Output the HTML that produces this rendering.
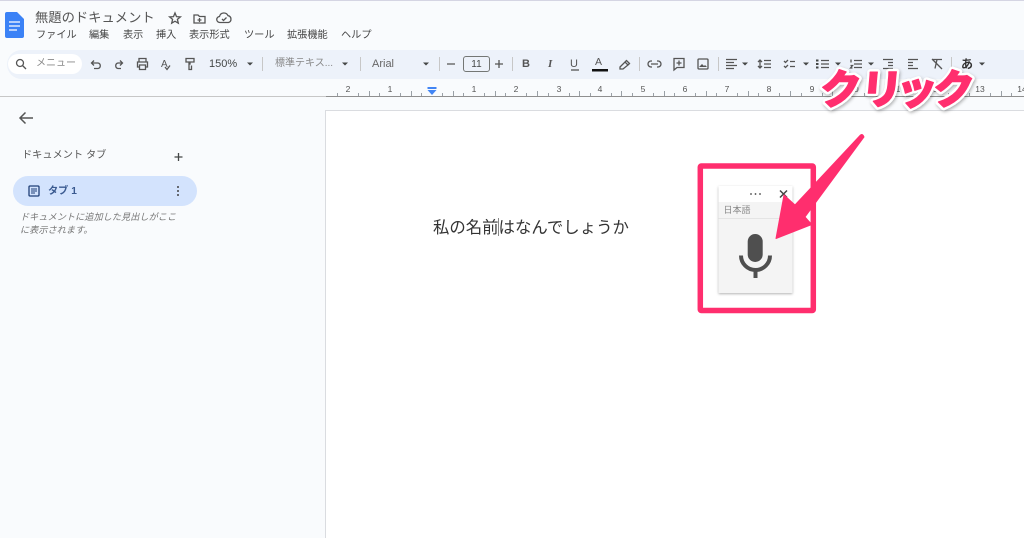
<!DOCTYPE html>
<html lang="ja"><head><meta charset="utf-8"><title>無題のドキュメント</title>
<style>
html,body{margin:0;padding:0;width:1024px;height:538px;overflow:hidden;background:#f9fbfd}
body{position:relative;font-family:"Liberation Sans","Noto Sans CJK JP",sans-serif;color:#444746}
.t{position:absolute;white-space:nowrap;line-height:1}
svg{position:absolute;left:0;top:0}
.ic{fill:none;stroke:#555;stroke-width:1.3}
</style></head><body>
<div style="position:absolute;left:0;top:0;width:1024px;height:1px;background:#d5d5e3"></div>
<div style="position:absolute;left:7px;top:50px;width:1017px;height:29px;background:#edf2fa;border-radius:15px 0 0 15px"></div>
<div style="position:absolute;left:8px;top:54px;width:74px;height:20px;background:#fff;border-radius:10px"></div>
<div style="position:absolute;left:0;top:96px;width:1024px;height:1px;background:#c7c7c7"></div>
<div style="position:absolute;left:325px;top:110px;width:699px;height:428px;background:#fff;border-left:1px solid #dadce0;border-top:1px solid #dadce0;box-sizing:border-box"></div>
<div style="position:absolute;left:13px;top:176px;width:184px;height:30px;background:#d3e3fd;border-radius:15px"></div>

<div class="t" style="left:35px;top:11px;font-size:13.3px;color:#555">無題のドキュメント</div>
<div class="t" style="left:36px;top:31px;font-size:10.2px;color:#444">ファイル</div>
<div class="t" style="left:89px;top:31px;font-size:10.2px;color:#444">編集</div>
<div class="t" style="left:123px;top:31px;font-size:10.2px;color:#444">表示</div>
<div class="t" style="left:156px;top:31px;font-size:10.2px;color:#444">挿入</div>
<div class="t" style="left:189px;top:31px;font-size:10.2px;color:#444">表示形式</div>
<div class="t" style="left:244px;top:31px;font-size:10.2px;color:#444">ツール</div>
<div class="t" style="left:287px;top:31px;font-size:10.2px;color:#444">拡張機能</div>
<div class="t" style="left:341px;top:31px;font-size:10.2px;color:#444">ヘルプ</div>
<div class="t" style="left:36px;top:59px;font-size:10px;color:#888">メニュー</div>
<div class="t" style="left:209px;top:59px;font-size:11px">150%</div>
<div class="t" style="left:275px;top:59px;font-size:10px;color:#888">標準テキス...</div>
<div class="t" style="left:372px;top:59px;font-size:11px;color:#666">Arial</div>
<div class="t" style="left:463px;top:56px;width:25px;height:14px;border:1px solid #747775;border-radius:3px;font-size:10px;line-height:15px;text-align:center">11</div>
<div class="t" style="left:522px;top:59px;font-size:11px;font-weight:bold;color:#555">B</div>
<div class="t" style="left:548px;top:59px;font-size:11px;font-style:italic;font-family:'Liberation Serif',serif;font-weight:bold;color:#555">I</div>
<div class="t" style="left:570px;top:59px;font-size:11px;color:#555">U</div>
<div class="t" style="left:595px;top:57px;font-size:10.5px;color:#555">A</div>
<div class="t" style="left:961px;top:58px;font-size:12px;font-weight:bold;color:#333">あ</div>
<div class="t" style="left:22px;top:151px;font-size:10.2px;color:#555">ドキュメント タブ</div>
<div class="t" style="left:48px;top:187px;font-size:10.2px;font-weight:bold;color:#3a5a90">タブ 1</div>
<div class="t" style="left:20px;top:211px;font-size:9.2px;font-style:italic;color:#777;line-height:13px">ドキュメントに追加した見出しがここ<br>に表示されます。</div>
<div class="t" style="left:433px;top:220px;font-size:16.4px;color:#333">私の名前はなんでしょうか</div>

<svg width="1024" height="538" viewBox="0 0 1024 538">
<path d="M5 14a2 2 0 0 1 2-2h10l7 7v17a2 2 0 0 1-2 2H7a2 2 0 0 1-2-2z" fill="#3b82f6"/>
<path d="M9 22h11M9 26h11M9 30h8" stroke="#fff" stroke-width="1.3" fill="none"/>
<path class="ic" d="M175 13l1.500 3.600 3.900.3-3 2.500.9 3.800-3.300-2-3.300 2 .9-3.800-3-2.500 3.900-.3z"/>
<path class="ic" d="M194 15h4l1.500 1.500h5.500v6.500h-11zM199.500 18v4M197.500 20h4"/>
<path class="ic" d="M220 22.500a3 3 0 0 1-.5-6 4.500 4.500 0 0 1 8.500-.8 3.500 3.500 0 0 1 .5 6.800zM222 19l1.500 1.500 3-3"/>
<circle class="ic" cx="20" cy="63" r="3.500"/><path class="ic" d="M22.500 65.500L26 69"/>
<path class="ic" d="M92 63h6a2.800 2.800 0 0 1 0 5.500h-4M94 60.500L91.500 63l2.500 2.500"/>
<path class="ic" d="M122 63h-4a2.800 2.800 0 0 0 0 5.500h3M120 60.500l2.500 2.500-2.500 2.500"/>
<path class="ic" d="M139 62v-3.500h7V62M139 67h-1.500v-5h10v5H146M139.500 65h6v4.500h-6z"/>
<text x="161" y="67" font-size="10" fill="#555" font-family="Liberation Sans">A</text>
<path class="ic" d="M165 67l2 2.500 3-4"/>
<path class="ic" d="M186 58.500h8v3.500h-8zM190 62v2h-0.500M190 64.500l-1-1v6h2.500v-4"/>
<path d="M247 62.500h6l-3 3z" fill="#444746"/>
<path d="M342 62.500h6l-3 3zM423 62.500h6l-3 3z" fill="#444746"/>
<g stroke="#c7c7c7"><path d="M262.500 57v14M360.500 57v14M439.500 57v14M512.500 57v14M639.500 57v14M718.500 57v14M951.500 57v14"/></g>
<path class="ic" d="M447 64h8M495 64h8M499 60v8"/>
<path d="M592 69h16v2.500h-16z" fill="#111"/>
<path class="ic" d="M571 70h8"/>
<path class="ic" d="M620 67l5-5 3 3-5 4h-3zM625 62l1.500-1.500 3 3-1.500 1.500"/>
<path class="ic" d="M652 61h-1a3 3 0 0 0 0 6h1M657 61h1a3 3 0 0 1 0 6h-1M651 64h7"/>
<path class="ic" d="M674 58.500h10v9h-7l-3 2.500zM679 60.500v5M676.500 63h5"/>
<rect class="ic" x="698" y="59" width="10" height="10" rx="1"/><path d="M699 67l3-3 2 2 1-1 2 2z" fill="#555"/>
<path class="ic" d="M726 59.500h11M726 62.500h8M726 65.500h11M726 68.500h8"/>
<path d="M742 62.500h6l-3 3zM803 62.500h6l-3 3zM835 62.500h6l-3 3zM868 62.500h6l-3 3zM979 62.500h6l-3 3z" fill="#444746"/>
<path class="ic" d="M760 60v8M758 62l2-2 2 2M758 66l2 2 2-2M764 60.500h7M764 64h7M764 67.500h7"/>
<path class="ic" d="M784 61l1.500 1.500 2.500-2.500M784 66l1.500 1.500 2.500-2.500M790 61.500h5M790 66.500h5"/>
<path class="ic" d="M821 60.500h8M821 64h8M821 67.500h8"/><path d="M816 59.500h2.500v2h-2.500zM816 63h2.500v2h-2.500zM816 66.500h2.500v2h-2.500z" fill="#444746"/>
<path class="ic" d="M854 60.500h8M854 64h8M854 67.500h8M851 59.500v3M850.500 65.500h2l-2 2.500h2"/>
<path class="ic" d="M883 59.500h10M888 62.500h5M888 65.500h5M883 68.500h10"/>
<path class="ic" d="M908 59.500h10M908 62.500h5M908 65.500h5M908 68.500h10"/>
<path class="ic" d="M932 59.500h10M937 59.500l-2 9M932 59l10 10"/>
<path d="M0 96.500h326" stroke="#c7c7c7"/>
<path d="M326 96.500h698" stroke="#8f8f8f"/>
<g font-size="8.500" fill="#555" text-anchor="middle" font-family="Liberation Sans">
<text x="348" y="92">2</text><text x="390" y="92">1</text><text x="474" y="92">1</text><text x="516" y="92">2</text><text x="559" y="92">3</text><text x="600" y="92">4</text><text x="643" y="92">5</text><text x="685" y="92">6</text><text x="727" y="92">7</text><text x="769" y="92">8</text><text x="812" y="92">9</text><text x="854" y="92">10</text><text x="896" y="92">11</text><text x="938" y="92">12</text><text x="980" y="92">13</text><text x="1022" y="92">14</text></g>
<g stroke="#9aa0a6">
<path d="M337.500 93v3M358.500 93v3M369.500 91v5M379.500 93v3M400.500 93v3M411.500 91v5M421.500 93v3M442.500 93v3M453.500 91v5M463.500 93v3M484.500 93v3M495.500 91v5M505.500 93v3M526.500 93v3M537.500 91v5M548.500 93v3M569.500 93v3M579.500 91v5M590.500 93v3M611.500 93v3M621.500 91v5M632.500 93v3M653.500 93v3M664.500 91v5M674.500 93v3M695.500 93v3M706.500 91v5M716.500 93v3M737.500 93v3M748.500 91v5M758.500 93v3M779.500 93v3M790.500 91v5M801.500 93v3M822.500 93v3M832.500 91v5M843.500 93v3M864.500 93v3M875.500 91v5M885.500 93v3M906.500 93v3M917.500 91v5M927.500 93v3M948.500 93v3M959.500 91v5M969.500 93v3M990.500 93v3M1001.500 91v5M1011.500 93v3"/>
</g>
<path d="M427.500 87h9v2h-9z" fill="#4285f4"/><path d="M427.500 90h9l-4.500 5z" fill="#4285f4"/>
<path d="M33 118H21M25.500 112.500L20 118l5.500 5.500" fill="none" stroke="#555" stroke-width="1.500"/>
<path d="M178.500 153v8M174.500 157h8" stroke="#444746" stroke-width="1.300" fill="none"/>
<rect x="29" y="186" width="10" height="10" rx="1" fill="none" stroke="#1f3f77" stroke-width="1.300"/>
<path d="M31 189h6M31 191h6M31 193h4" stroke="#1f3f77" stroke-width="1"/>
<circle cx="178" cy="187" r="1" fill="#444"/><circle cx="178" cy="191" r="1" fill="#444"/><circle cx="178" cy="195" r="1" fill="#444"/>
<path d="M498.500 218v18" stroke="#888" stroke-width="1"/>
<defs><filter id="s" x="-20%" y="-20%" width="140%" height="140%"><feDropShadow dx="0" dy="1" stdDeviation="1.200" flood-color="#000" flood-opacity=".3"/></filter>
<filter id="s2" x="-20%" y="-20%" width="140%" height="140%"><feDropShadow dx="1" dy="1.500" stdDeviation="1.500" flood-color="#000" flood-opacity=".3"/></filter></defs>
<rect x="718.500" y="186" width="74" height="107" fill="#f4f4f4" filter="url(#s)"/>
<rect x="718.500" y="186" width="74" height="16" fill="#fff"/>
<path d="M718.500 218.500h74" stroke="#e4e4e4"/>
<text x="723.500" y="213" font-size="9" fill="#888" font-family="Liberation Sans,Noto Sans CJK JP">日本語</text>
<circle cx="751" cy="194" r=".9" fill="#444"/><circle cx="755.500" cy="194" r=".9" fill="#444"/><circle cx="760" cy="194" r=".9" fill="#444"/>
<path d="M780 190.500l7 7M787 190.500l-7 7" stroke="#444" stroke-width="1.500"/>
<rect x="747.700" y="234" width="15" height="28" rx="7.500" fill="#4f4f4f"/>
<path d="M741 255.500a14.500 14.500 0 0 0 29 0" fill="none" stroke="#4f4f4f" stroke-width="4"/>
<path d="M755.500 268v10" stroke="#4f4f4f" stroke-width="4"/>
<rect x="700.300" y="166" width="113" height="144.500" fill="none" stroke="#ff2e6e" stroke-width="5.500" rx="1"/>
<path d="M776 238.500L784 195L795 205L860.500 135Q863 133.500 864 137L805 217L811.700 224.500Z" fill="#ff2e6e" stroke="#ff2e6e" stroke-width="1" stroke-linejoin="round"/>
<g filter="url(#s2)" font-family="Noto Sans CJK JP,sans-serif" font-weight="900" font-size="41" stroke-linejoin="round">
<text transform="translate(0 104) skewX(-5)" x="819 860 895 932" y="0" fill="#fff" stroke="#fff" stroke-width="6">クリック</text>
<text transform="translate(0 104) skewX(-5)" x="819 860 895 932" y="0" fill="#ff2e6e" stroke="#ff2e6e" stroke-width="1.200">クリック</text>
</g>
</svg>
</body></html>
